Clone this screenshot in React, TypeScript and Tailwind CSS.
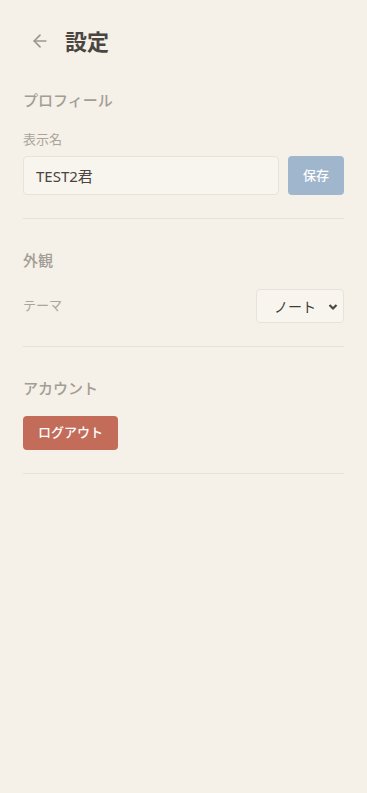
import React from "react";

export default function App() {
  return (
    <div
      className="min-h-[793px] w-full bg-[#f5f0e8] px-[23px] pt-6"
      style={{ fontFamily: '"Noto Sans", "Noto Sans CJK JP", sans-serif' }}
    >
      <div className="flex h-[33px] items-center">
        <button className="ml-[5px] flex h-6 w-6 items-center justify-center text-[#9c968e]">
          <svg width="20" height="20" viewBox="0 0 24 24" fill="none" stroke="currentColor" strokeWidth="2" strokeLinecap="round" strokeLinejoin="round">
            <path d="M19 12H5" />
            <path d="M12 19l-7-7 7-7" />
          </svg>
        </button>
        <h1 className="ml-[13px] text-[22px] font-bold leading-none text-[#4a4540]">設定</h1>
      </div>

      <section className="border-b border-[#e6e0d7] pt-8 pb-[23px]">
        <h2 className="mb-[18px] text-[15px] font-medium leading-[22px] text-[#a39d95]">プロフィール</h2>
        <div className="mb-[7px] text-[13px] leading-[20px] text-[#aaa49c]">表示名</div>
        <div className="flex gap-[9px]">
          <input
            defaultValue="TEST2君"
            className="h-[39px] flex-1 min-w-0 rounded-[4px] border border-[#e8e2d9] bg-[#f8f5ef] px-3 text-[15px] text-[#4a4540] outline-none"
          />
          <button className="h-[39px] w-[56px] rounded-[4px] bg-[#a0b6cd] text-[13px] font-medium text-white">保存</button>
        </div>
      </section>

      <section className="border-b border-[#e6e0d7] pt-[30px] pb-[23px]">
        <h2 className="mb-[18px] text-[15px] font-medium leading-[22px] text-[#a39d95]">外観</h2>
        <div className="flex items-center justify-between">
          <span className="text-[13px] text-[#aaa49c]">テーマ</span>
          <div className="relative flex h-[34px] w-[88px] items-center rounded-[4px] border border-[#e8e2d9] bg-[#f8f5ef]">
            <span className="ml-[17px] text-[14px] text-[#3f3a35]">ノート</span>
            <svg className="absolute right-[5px] top-[13px]" width="10" height="8" viewBox="0 0 10 8" fill="none" stroke="#4a4540" strokeWidth="2.2">
              <path d="M1.5 2l3.5 3.5 3.5-3.5" />
            </svg>
          </div>
        </div>
      </section>

      <section className="border-b border-[#e6e0d7] pt-[30px] pb-[23px]">
        <h2 className="mb-[17px] text-[15px] font-medium leading-[22px] text-[#a39d95]">アカウント</h2>
        <button className="h-[34px] w-[95px] rounded-[4px] bg-[#c46c5a] text-[13px] font-medium text-white">ログアウト</button>
      </section>
    </div>
  );
}
